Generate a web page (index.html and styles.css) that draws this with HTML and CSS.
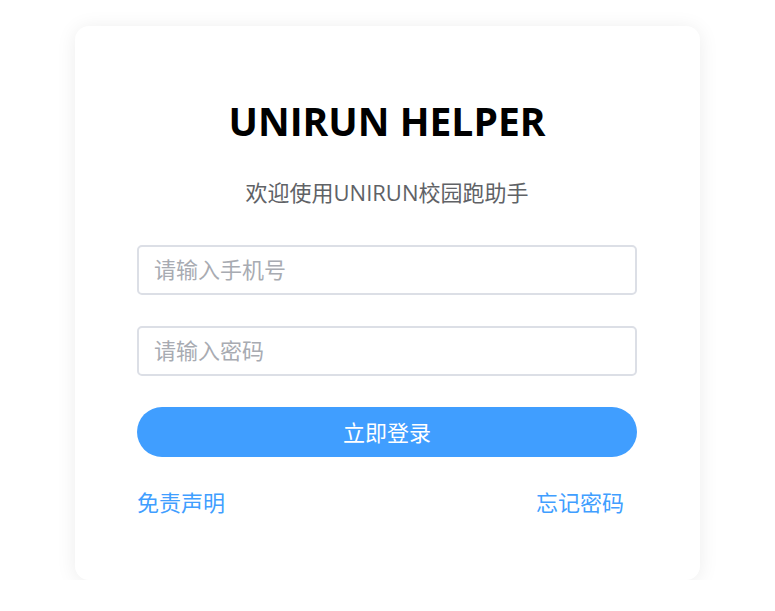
FILE: index.html
```html
<!DOCTYPE html>
<html lang="zh">
<head>
<meta charset="utf-8">
<link rel="stylesheet" href="styles.css">
</head>
<body>
<div class="card">
  <h1 class="title">UNIRUN HELPER</h1>
  <p class="subtitle">欢迎使用UNIRUN校园跑助手</p>
  <div class="field field-first"><input class="input" type="text" placeholder="请输入手机号"></div>
  <div class="field"><input class="input" type="password" placeholder="请输入密码"></div>
  <button class="btn">立即登录</button>
  <div class="links">
    <a class="link">免责声明</a>
    <a class="link">忘记密码</a>
  </div>
</div>
</body>
</html>
```
FILE: styles.css
```css
html, body {
  margin: 0;
  padding: 0;
  background: #ffffff;
  font-family: "Open Sans", "Noto Sans CJK SC", sans-serif;
}
body {
  padding-top: 26px;
}
.card {
  width: 625px;
  height: 554px;
  box-sizing: border-box;
  margin: 0 auto;
  background: #fff;
  border-radius: 14px;
  box-shadow: 0 2px 20px rgba(0, 0, 0, 0.08);
  padding: 72px 63px 0 62px;
}
.title {
  margin: 0;
  text-align: center;
  font-size: 39px;
  line-height: 46px;
  font-weight: 700;
  color: #000;
}
.subtitle {
  margin: 33px 0 0;
  text-align: center;
  font-size: 22px;
  line-height: 30px;
  color: #606266;
}
.field {
  margin-top: 31px;
}
.field-first {
  margin-top: 38px;
}
.input {
  display: block;
  width: 100%;
  height: 50px;
  box-sizing: border-box;
  border: 2px solid #dcdfe6;
  border-radius: 5px;
  padding: 0 15px 2px;
  font-family: inherit;
  font-size: 22px;
  color: #606266;
  outline: none;
}
.input::placeholder {
  color: #a8abb2;
}
.btn {
  display: block;
  width: 100%;
  height: 50px;
  margin-top: 31px;
  padding: 0 0 3px;
  border: none;
  border-radius: 25px;
  background: #409eff;
  color: #fff;
  font-family: inherit;
  font-size: 22px;
  cursor: pointer;
}
.links {
  display: flex;
  justify-content: space-between;
  margin-top: 30px;
  padding-right: 13px;
}
.link {
  font-size: 22px;
  line-height: 30px;
  color: #409eff;
  cursor: pointer;
}
```
